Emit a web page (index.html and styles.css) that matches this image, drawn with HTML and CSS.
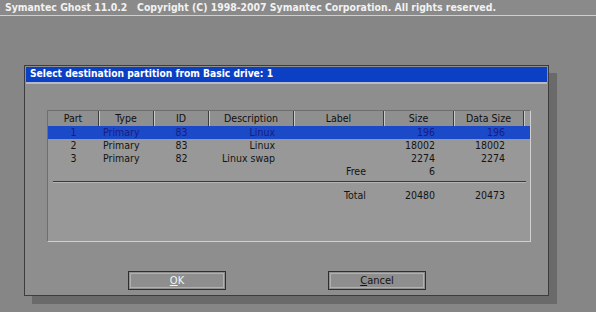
FILE: index.html
```html
<!DOCTYPE html>
<html lang="en">
<head>
  <meta charset="UTF-8" />
  <title>Symantec Ghost</title>
  <link rel="stylesheet" href="styles.css">
</head>
<body>
  <div class="topbar">Symantec Ghost 11.0.2&nbsp;&nbsp;&nbsp;Copyright (C) 1998-2007 Symantec Corporation. All rights reserved.</div>

  <div class="stage">
    <div class="dialog">
      <div class="titlebar">Select destination partition from Basic drive: 1</div>

      <div class="panel">
        <div class="grid head">
          <div class="c-part">Part</div>
          <div class="c-type">Type</div>
          <div class="c-id">ID</div>
          <div class="c-desc">Description</div>
          <div class="c-label">Label</div>
          <div class="c-size">Size</div>
          <div class="c-data">Data Size</div>
        </div>
        <div class="grid row selected">
          <div class="c-part">1</div>
          <div class="c-type">Primary</div>
          <div class="c-id">83</div>
          <div class="c-desc">Linux</div>
          <div class="c-label"></div>
          <div class="c-size">196</div>
          <div class="c-data">196</div>
        </div>
        <div class="grid row">
          <div class="c-part">2</div>
          <div class="c-type">Primary</div>
          <div class="c-id">83</div>
          <div class="c-desc">Linux</div>
          <div class="c-label"></div>
          <div class="c-size">18002</div>
          <div class="c-data">18002</div>
        </div>
        <div class="grid row">
          <div class="c-part">3</div>
          <div class="c-type">Primary</div>
          <div class="c-id">82</div>
          <div class="c-desc">Linux swap</div>
          <div class="c-label"></div>
          <div class="c-size">2274</div>
          <div class="c-data">2274</div>
        </div>
        <div class="grid row">
          <div class="c-part"></div>
          <div class="c-type"></div>
          <div class="c-id"></div>
          <div class="c-desc"></div>
          <div class="c-label">Free</div>
          <div class="c-size">6</div>
          <div class="c-data"></div>
        </div>
        <div class="divider"></div>
        <div class="grid row total">
          <div class="c-part"></div>
          <div class="c-type"></div>
          <div class="c-id"></div>
          <div class="c-desc"></div>
          <div class="c-label">Total</div>
          <div class="c-size">20480</div>
          <div class="c-data">20473</div>
        </div>
      </div>

      <div class="buttons">
        <button class="btn btn-ok"><u>O</u>K</button>
        <button class="btn btn-cancel"><u>C</u>ancel</button>
      </div>
    </div>
  </div>
</body>
</html>
```

FILE: styles.css
```css
body {
  margin: 0;
  background: #868686;
  font-family: 'DejaVu Sans Condensed', 'DejaVu Sans', sans-serif;
  width: 596px;
  height: 312px;
  overflow: hidden;
}
.topbar {
  height: 16px;
  line-height: 15px;
  padding-left: 5px;
  color: #f2f2f2;
  font-weight: 700;
  font-size: 10.4px;
  background: #8a8a8a;
  border-bottom: 1px solid #cfcfcf;
  box-sizing: border-box;
  white-space: nowrap;
}
.stage {
  padding: 49px 0 0 24px;
}
.dialog {
  width: 525px;
  height: 231px;
  background: #8e8e8e;
  border: 1px solid #3c3c3c;
  box-sizing: border-box;
  box-shadow: 8px 8px 0 #6a6a6a;
  display: flex;
  flex-direction: column;
}
.titlebar {
  height: 15px;
  line-height: 14px;
  margin: 1px 1px 0;
  padding-left: 4px;
  background: #0b40c4;
  color: #fff;
  font-weight: 700;
  font-size: 10.2px;
  border-bottom: 2px solid #b8b8c8;
  white-space: nowrap;
}
.panel {
  margin: 26px 0 0 22px;
  width: 484px;
  height: 132px;
  background: #989898;
  border-top: 1px solid #6e6e6e;
  border-left: 1px solid #6e6e6e;
  border-right: 1px solid #d0d0d0;
  border-bottom: 1px solid #d0d0d0;
  box-sizing: border-box;
}
.grid {
  display: grid;
  grid-template-columns: 51px 55px 55px 85px 90px 70px 70px;
  font-size: 10.5px;
  color: #141414;
  white-space: nowrap;
}
.head {
  height: 15px;
  line-height: 15px;
  background: #8f8f8f;
  width: 476px;
  color: #101010;
}
.head > div {
  text-align: center;
  border-right: 1px solid #3c3c3c;
  box-shadow: 1px 0 0 #c8c8c8;
}
.row {
  height: 13px;
  line-height: 13px;
}
.selected {
  background: #1a4ac8;
  color: #1a1a80;
}
.row .c-part,
.row .c-id {
  text-align: center;
}
.row .c-type {
  padding-left: 4px;
}
.row .c-desc,
.row .c-size,
.row .c-data {
  text-align: right;
  padding-right: 19px;
}
.row .c-label {
  text-align: right;
  padding-right: 18px;
}
.divider {
  margin: 3px 4px 0 5px;
  height: 1px;
  background: #3a3a3a;
  box-shadow: 0 1px 0 #b4b4b4;
}
.total {
  margin-top: 7px;
}
.buttons {
  display: flex;
  gap: 102px;
  margin: 29px 0 0 103px;
}
.btn {
  width: 98px;
  height: 19px;
  padding: 0;
  background: #8e8e8e;
  border: 1px solid #2e2e2e;
  outline: 1px solid #b0b0b0;
  outline-offset: -3px;
  font-family: inherit;
  font-size: 11px;
  line-height: 16px;
}
.btn-ok {
  color: #f4f4f4;
}
.btn-cancel {
  color: #141414;
}
```
